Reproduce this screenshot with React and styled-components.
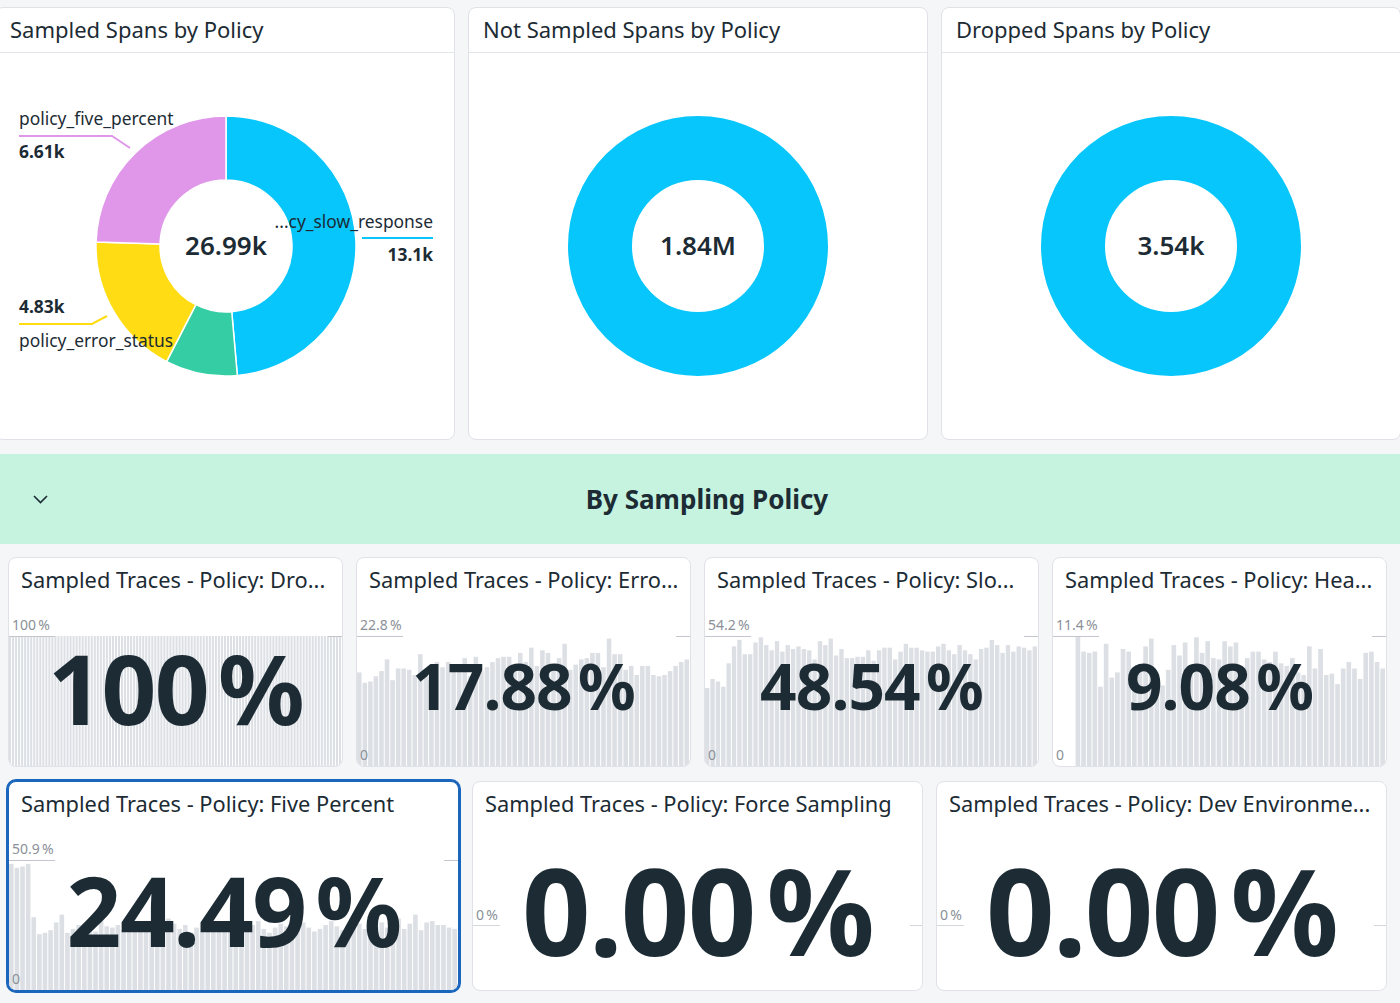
import React from 'react';
import styled, { createGlobalStyle } from 'styled-components';

const GlobalStyle = createGlobalStyle`
  html, body {
    margin: 0;
    padding: 0;
    background: #f5f6f8;
  }
  body {
    font-family: 'Noto Sans', 'Open Sans', sans-serif;
    color: #1c2b34;
    overflow: hidden;
  }
`;

const INK = '#1c2b34';

const Page = styled.div`
  width: 1400px;
  height: 1003px;
  overflow: hidden;
  background: #f5f6f8;
`;

const TopRow = styled.div`
  display: grid;
  grid-template-columns: repeat(3, 460px);
  gap: 13px;
  margin-left: -5px;
  padding-top: 7px;
`;

const Panel = styled.section`
  height: 433px;
  box-sizing: border-box;
  background: #fff;
  border: 1px solid #e1e2e8;
  border-radius: 8px;
  display: flex;
  flex-direction: column;
  overflow: hidden;
`;

const PanelHeader = styled.header`
  height: 45px;
  box-sizing: border-box;
  border-bottom: 1px solid #e4e5ea;
  padding: 6px 14px 0;
  font-size: 22px;
  line-height: 30px;
  white-space: nowrap;
`;

const PanelBody = styled.div`
  flex: 1;
  display: flex;
  align-items: center;
  justify-content: center;
`;

const Band = styled.div`
  margin-top: 14px;
  height: 90px;
  background: #c5f3e0;
  display: grid;
  grid-template-columns: 80px 1fr 66px;
  align-items: center;
`;

const Chevron = styled.button`
  border: 0;
  background: none;
  padding: 0;
  margin-left: 31px;
  width: 18px;
  height: 18px;
  display: flex;
  align-items: center;
  justify-content: center;
  color: ${INK};
`;

const BandTitle = styled.h2`
  margin: 0;
  text-align: center;
  font-size: 26px;
  font-weight: 700;
  line-height: 34px;
`;

const TileRow = styled.div`
  display: grid;
  grid-template-columns: repeat(${(p) => p.cols}, ${(p) => p.width}px);
  gap: 13px;
  padding-left: 8px;
  margin-top: ${(p) => p.top}px;
`;

const Tile = styled.div`
  height: 210px;
  box-sizing: border-box;
  background: #fff;
  border: 1px solid ${(p) => (p.selected ? '#1b66bd' : '#e1e2e8')};
  box-shadow: ${(p) => (p.selected ? '0 0 0 2px #1b66bd' : 'none')};
  border-radius: 8px;
  display: flex;
  flex-direction: column;
  overflow: hidden;
`;

const TileTitle = styled.div`
  height: 46px;
  box-sizing: border-box;
  padding: 8px 12px 0;
  font-size: 21.8px;
  line-height: 28px;
  white-space: nowrap;
  overflow: hidden;
`;

const TileBody = styled.div`
  flex: 1;
  position: relative;
  display: flex;
  align-items: center;
  justify-content: center;
`;

const ChartArea = styled.div`
  position: absolute;
  left: 0;
  right: 0;
  top: ${(p) => p.top}px;
  bottom: ${(p) => (p.flat ? 'auto' : '0')};
  height: ${(p) => (p.flat ? '1px' : 'auto')};
  svg {
    display: block;
    width: 100%;
    height: 100%;
  }
`;

const AxisLabel = styled.span`
  position: absolute;
  left: 3px;
  ${(p) => (p.bottom != null ? `bottom: ${p.bottom}px;` : `top: ${p.top}px;`)}
  font-size: 14px;
  line-height: 15px;
  color: #8b9098;
  z-index: 1;
`;

const Value = styled.div`
  position: relative;
  z-index: 2;
  font-size: ${(p) => p.size}px;
  font-weight: 700;
  line-height: 1;
  letter-spacing: -0.015em;
  white-space: nowrap;
  margin-top: ${(p) => p.shift || 0}px;
`;

const Unit = styled.span`
  margin-left: 0.1em;
`;

/* ---------- donut charts ---------- */

const polar = (cx, cy, r, deg) => {
  const a = ((deg - 90) * Math.PI) / 180;
  return [cx + r * Math.cos(a), cy + r * Math.sin(a)];
};

const segPath = (cx, cy, ro, ri, a0, a1) => {
  const [x0, y0] = polar(cx, cy, ro, a0);
  const [x1, y1] = polar(cx, cy, ro, a1);
  const [x2, y2] = polar(cx, cy, ri, a1);
  const [x3, y3] = polar(cx, cy, ri, a0);
  const large = a1 - a0 > 180 ? 1 : 0;
  return `M${x0} ${y0} A${ro} ${ro} 0 ${large} 1 ${x1} ${y1} L${x2} ${y2} A${ri} ${ri} 0 ${large} 0 ${x3} ${y3} Z`;
};

const segments = [
  { from: 0, to: 175, color: '#07c6fb' },
  { from: 175, to: 207.2, color: '#35cda3' },
  { from: 207.2, to: 271.8, color: '#ffdc13' },
  { from: 271.8, to: 360, color: '#e097ea' },
];

const labelFont = { fontFamily: "'Noto Sans', 'Open Sans', sans-serif", fill: INK };

const PolicyPie = () => {
  const cx = 230;
  const cy = 193;
  return (
    <svg width="458" height="386" viewBox="0 0 458 386">
      {segments.map((s) => (
        <path
          key={s.from}
          d={segPath(cx, cy, 130, 66, s.from, s.to)}
          fill={s.color}
          stroke="#fff"
          strokeWidth="1.5"
        />
      ))}
      <text x={cx} y={cy + 9} textAnchor="middle" fontSize="26" fontWeight="600" style={labelFont}>
        26.99k
      </text>

      <text x="23" y="72" fontSize="17.4" style={labelFont}>policy_five_percent</text>
      <polyline points="23,83 116,83 134,95" fill="none" stroke="#e097ea" strokeWidth="2" />
      <text x="23" y="105" fontSize="17.4" fontWeight="700" style={labelFont}>6.61k</text>

      <text x="437" y="175" fontSize="17.4" textAnchor="end" style={labelFont}>...cy_slow_response</text>
      <line x1="366" y1="185" x2="437" y2="185" stroke="#07c6fb" strokeWidth="2" />
      <text x="437" y="208" fontSize="17.4" fontWeight="700" textAnchor="end" style={labelFont}>13.1k</text>

      <text x="23" y="260" fontSize="17.4" fontWeight="700" style={labelFont}>4.83k</text>
      <polyline points="23,271 96,271 111,263" fill="none" stroke="#ffdc13" strokeWidth="2" />
      <text x="23" y="294" fontSize="17.4" style={labelFont}>policy_error_status</text>
    </svg>
  );
};

const RingDonut = ({ total }) => (
  <svg width="262" height="262" viewBox="0 0 262 262">
    <circle cx="131" cy="131" r="98" fill="none" stroke="#07c6fb" strokeWidth="64" />
    <text x="131" y="140" textAnchor="middle" fontSize="26" fontWeight="600" style={labelFont}>
      {total}
    </text>
  </svg>
);

/* ---------- bar sparkline charts ---------- */

const BarChart = ({ data, width, height, leftLine, rightLine }) => {
  const bw = width / data.length;
  return (
    <svg viewBox={`0 0 ${width} ${height}`} preserveAspectRatio="none">
      {data.map((v, i) =>
        v == null ? null : (
          <rect
            key={i}
            x={i * bw}
            y={height * (1 - v)}
            width={Math.max(bw - 1, 1)}
            height={height * v}
            fill="#dcdfe4"
          />
        )
      )}
      <line x1="0" y1="0.5" x2={leftLine} y2="0.5" stroke="#c3c7cd" />
      <line x1={width - rightLine} y1="0.5" x2={width} y2="0.5" stroke="#c3c7cd" />
    </svg>
  );
};

const FlatLine = ({ width, leftLine, rightLine }) => (
  <svg viewBox={`0 0 ${width} 1`} preserveAspectRatio="none">
    <line x1="0" y1="0.5" x2={leftLine} y2="0.5" stroke="#d4d7dc" />
    <line x1={width - rightLine} y1="0.5" x2={width} y2="0.5" stroke="#d4d7dc" />
  </svg>
);

const errorSeries = [
  0.72, 0.64, 0.65, 0.69, 0.73, 0.82, 0.66, 0.75, 0.75, 0.74, 0.7, 0.86, 0.72, 0.78, 0.8,
  0.76, 0.8, 0.74, 0.73, 0.83, 0.69, 0.84, 0.73, 0.76, 0.8, 0.83, 0.84, 0.84, 0.76, 0.87,
  0.8, 0.91, 0.77, 0.89, 0.87, 0.76, 0.83, 0.94, 0.74, 0.78, 0.82, 0.83, 0.87, 0.87, 0.76,
  0.98, 0.86, 0.86, 0.74, 0.77, 0.7, 0.77, 0.77, 0.7, 0.69, 0.7, 0.73, 0.77, 0.8, 0.82,
];

const slowSeries = [
  0.6, 0.67, 0.65, 0.61, 0.79, 0.92, 0.97, 0.86, 0.86, 0.95, 0.99, 0.93, 0.89, 0.96, 0.88,
  0.93, 0.9, 0.92, 0.9, 0.89, 0.82, 0.96, 0.93, 0.98, 0.85, 0.9, 0.83, 0.83, 0.84, 0.84,
  0.89, 0.81, 0.89, 0.91, 0.91, 0.82, 0.88, 0.94, 0.91, 0.91, 0.89, 0.88, 0.88, 0.92, 0.94,
  0.89, 0.86, 0.93, 0.89, 0.86, 0.82, 0.9, 0.91, 0.97, 0.93, 0.87, 0.93, 0.88, 0.92, 0.91,
  0.89, 0.92,
];

const headSeries = [
  null, null, null, null, 1.0, 0.88, 0.87, 0.88, 0.61, 0.94, 0.68, 0.72, 0.9, 0.88, 0.63,
  0.75, 0.92, 0.98, 0.72, 0.62, 0.74, 0.93, 0.85, 0.95, 0.74, 0.99, 0.87, 0.96, 0.83, 0.82,
  0.96, 0.92, 0.95, 0.71, 0.83, 0.88, 0.88, 0.82, 0.8, 0.88, 0.79, 0.77, 0.83, 0.72, 0.7,
  0.92, 0.75, 0.9, 0.7, 0.71, 0.63, 0.75, 0.8, 0.75, 0.67, 0.87, 0.88, 0.8, 0.75,
];

const fiveSeries = [
  0.97, 0.94, 0.95, 0.97, 0.56, 0.43, 0.44, 0.46, 0.52, 0.58, 0.44, 0.47, 0.5, 0.51, 0.48,
  0.45, 0.53, 0.49, 0.48, 0.5, 0.46, 0.52, 0.45, 0.47, 0.5, 0.53, 0.48, 0.46, 0.55, 0.51,
  0.47, 0.5, 0.44, 0.48, 0.52, 0.49, 0.5, 0.47, 0.45, 0.51, 0.49, 0.48, 0.46, 0.5, 0.53,
  0.47, 0.44, 0.48, 0.51, 0.49, 0.46, 0.5, 0.52, 0.48, 0.45, 0.47, 0.5, 0.53, 0.49, 0.46,
  0.48, 0.5, 0.51, 0.47, 0.45, 0.49, 0.52, 0.48, 0.5, 0.55, 0.47, 0.51, 0.58, 0.46, 0.52,
  0.53, 0.5, 0.5, 0.48, 0.47,
];

const NB = '\u202f';

const smallTiles = [
  { title: 'Sampled Traces - Policy: Dro...', value: '100', size: 96, shift: 6, max: `100${NB}%`, data: Array(110).fill(1), zero: null },
  { title: 'Sampled Traces - Policy: Erro...', value: '17.88', size: 64, shift: 2, max: `22.8${NB}%`, data: errorSeries, zero: '0' },
  { title: 'Sampled Traces - Policy: Slo...', value: '48.54', size: 64, shift: 2, max: `54.2${NB}%`, data: slowSeries, zero: '0' },
  { title: 'Sampled Traces - Policy: Hea...', value: '9.08', size: 64, shift: 2, max: `11.4${NB}%`, data: headSeries, zero: '0' },
];

const wideTiles = [
  { title: 'Sampled Traces - Policy: Five Percent', value: '24.49', size: 96, shift: 2, max: `50.9${NB}%`, data: fiveSeries, zero: '0', selected: true },
  { title: 'Sampled Traces - Policy: Force Sampling', value: '0.00', size: 120, shift: 2, flat: `0${NB}%` },
  { title: 'Sampled Traces - Policy: Dev Environme...', value: '0.00', size: 120, shift: 2, flat: `0${NB}%` },
];

const QueryTile = ({ tile, width }) => {
  const inner = width - 2;
  return (
    <Tile selected={tile.selected}>
      <TileTitle>{tile.title}</TileTitle>
      <TileBody>
        {tile.flat ? (
          <>
            <AxisLabel top={79}>{tile.flat}</AxisLabel>
            <ChartArea top={97} flat>
              <FlatLine width={inner} leftLine={27} rightLine={12} />
            </ChartArea>
          </>
        ) : (
          <>
            <AxisLabel top={13}>{tile.max}</AxisLabel>
            {tile.zero && <AxisLabel bottom={4}>{tile.zero}</AxisLabel>}
            <ChartArea top={32}>
              <BarChart data={tile.data} width={inner} height={130} leftLine={46} rightLine={14} />
            </ChartArea>
          </>
        )}
        <Value size={tile.size} shift={tile.shift}>
          {tile.value}
          <Unit>%</Unit>
        </Value>
      </TileBody>
    </Tile>
  );
};

const App = () => (
  <Page>
    <GlobalStyle />
    <TopRow>
      <Panel>
        <PanelHeader>Sampled Spans by Policy</PanelHeader>
        <PanelBody>
          <PolicyPie />
        </PanelBody>
      </Panel>
      <Panel>
        <PanelHeader>Not Sampled Spans by Policy</PanelHeader>
        <PanelBody>
          <RingDonut total="1.84M" />
        </PanelBody>
      </Panel>
      <Panel>
        <PanelHeader>Dropped Spans by Policy</PanelHeader>
        <PanelBody>
          <RingDonut total="3.54k" />
        </PanelBody>
      </Panel>
    </TopRow>

    <Band>
      <Chevron aria-label="Collapse group">
        <svg width="15" height="9" viewBox="0 0 15 9">
          <polyline points="1,1 7.5,7.5 14,1" fill="none" stroke={INK} strokeWidth="1.6" />
        </svg>
      </Chevron>
      <BandTitle>By Sampling Policy</BandTitle>
      <span />
    </Band>

    <TileRow cols={4} width={335} top={13}>
      {smallTiles.map((t) => (
        <QueryTile key={t.title} tile={t} width={335} />
      ))}
    </TileRow>

    <TileRow cols={3} width={451} top={14}>
      {wideTiles.map((t) => (
        <QueryTile key={t.title} tile={t} width={451} />
      ))}
    </TileRow>
  </Page>
);

export default App;
